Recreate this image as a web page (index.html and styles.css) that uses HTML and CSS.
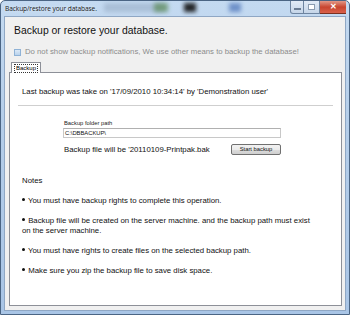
FILE: index.html
```html
<!DOCTYPE html>
<html lang="en">
<head>
<meta charset="UTF-8" />
<title>Backup/restore your database.</title>
<link rel="stylesheet" href="styles.css">
</head>
<body>

<div class="window">
  <!-- Title bar (aero glass) -->
  <div class="titlebar">
    <span class="blur b1"></span>
    <span class="blur b2"></span>
    <span class="blur b3"></span>
    <span class="blur b4"></span>
    <span class="title">Backup/restore your database.</span>
    <div class="caption-buttons">
      <span class="cbtn min"><i></i></span>
      <span class="cbtn max"><i></i></span>
      <span class="cbtn close">&#x2715;</span>
    </div>
  </div>

  <div class="client">
    <h1 class="heading">Backup or restore your database.</h1>

    <label class="notify">
      <span class="checkbox"></span>
      Do not show backup notifications, We use other means to backup the database!
    </label>

    <div class="tabs">
      <span class="tab"><span class="focus">Backup</span></span>
    </div>

    <div class="panel">
      <p class="last">Last backup was take on '17/09/2010 10:34:14' by 'Demonstration user'</p>
      <hr class="sep">

      <div class="form">
        <div class="label">Backup folder path</div>
        <div class="input">C:\DBBACKUP\</div>
        <div class="form-row">
          <span>Backup file will be '20110109-Printpak.bak</span>
          <span class="button">Start backup</span>
        </div>
      </div>

      <div class="notes">
        <p>Notes</p>
        <p><b class="dot"></b> You must have backup rights to complete this operation.</p>
        <p><b class="dot"></b> Backup file will be created on the server machine. and the backup path must exist on the server machine.</p>
        <p><b class="dot"></b> You must have rights to create files on the selected backup path.</p>
        <p><b class="dot"></b> Make sure you zip the backup file to save disk space.</p>
      </div>
    </div>
  </div>
</div>

</body>
</html>
```

FILE: styles.css
```css
/* --- Reset & basics --- */
* {
  margin: 0; padding: 0; box-sizing: border-box;
}
html, body {
  width: 350px;
  height: 315px;
  overflow: hidden;
  font-family: 'Liberation Sans', Arial, sans-serif;
  background: #fff;
}

/* --- Window frame --- */
.window {
  width: 350px;
  height: 315px;
  border: 1px solid #4b6584;
  border-radius: 5px 5px 0 0;
  background: linear-gradient(180deg, #c4daf1 0%, #b4cde9 40%, #a9c5e6 100%);
  display: flex;
  flex-direction: column;
  padding: 0 3px 3px 3px;
}

/* --- Title bar --- */
.titlebar {
  position: relative;
  height: 15px;
  display: flex;
  align-items: center;
  overflow: hidden;
}
.title {
  position: relative;
  font-family: 'Open Sans', sans-serif;
  font-size: 6.6px;
  color: #1a1a1a;
  letter-spacing: -0.1px;
  padding-left: 1px;
  text-shadow: 0 0 3px #e8f1fb;
}
.blur {
  position: absolute;
  top: 2px;
  height: 9px;
  filter: blur(2px);
  opacity: 0.7;
}
.b1 { left: 100px; width: 60px; background: #9fb4cc; }
.b2 { left: 150px; width: 14px; background: #5a8a56; }
.b3 { left: 180px; width: 12px; background: #111; opacity: 0.9; }
.b4 { left: 225px; width: 12px; background: #4c73b8; }

.caption-buttons {
  position: absolute;
  right: -2px;
  top: -1px;
  display: flex;
}
.cbtn {
  height: 14px;
  border: 1px solid #6d84a0;
  border-top: none;
  background: linear-gradient(180deg, #e3ecf7, #c5d5e8);
  display: flex;
  align-items: center;
  justify-content: center;
}
.min { width: 14px; border-radius: 0 0 0 3px; }
.max { width: 16px; border-left: none; }
.close {
  width: 28px;
  border-left: none;
  border-radius: 0 0 3px 0;
  background: linear-gradient(180deg, #e6a595, #c8452f 55%, #d9604a);
  color: #fff;
  font-size: 8px;
  font-weight: bold;
  border-color: #7a3020;
}
.min i {
  display: block;
  width: 7px;
  height: 2px;
  margin-top: 4px;
  background: #fff;
  border: 1px solid #6a7c93;
}
.max i {
  display: block;
  width: 7px;
  height: 6px;
  background: #fff;
  border: 1px solid #8a9bb0;
}

/* --- Client area --- */
.client {
  flex: 1;
  background: #f0f0f0;
  border: 1px solid #8fa7c4;
  display: flex;
  flex-direction: column;
  padding: 0 3px 4px 4px;
}
.heading {
  font-size: 10.4px;
  font-weight: normal;
  color: #111;
  margin: 8px 0 0 5px;
  line-height: 12px;
}
.notify {
  display: flex;
  align-items: center;
  gap: 4px;
  margin: 10px 0 0 5px;
  font-size: 7.75px;
  color: #8c8c8c;
  line-height: 10px;
}
.checkbox {
  width: 7px;
  height: 7px;
  border: 1px solid #8fb2d6;
  background: linear-gradient(180deg, #dbe9f7, #b9d2ec);
}

/* --- Tabs --- */
.tabs {
  display: flex;
  margin: 4px 0 0 2px;
  height: 11px;
}
.tab {
  position: relative;
  top: 1px;
  height: 11px;
  padding: 1px 2px;
  border: 1px solid #8d9098;
  border-bottom: none;
  background: #fff;
  font-size: 6px;
  line-height: 7px;
}
.focus {
  display: block;
  border: 1px dotted #333;
  padding: 0 1px;
  height: 9px;
  line-height: 7px;
}

/* --- Tab page --- */
.panel {
  flex: 1;
  background: #fff;
  border: 1px solid #8d9098;
  padding: 0 8px;
}
.last {
  font-size: 7.8px;
  color: #111;
  margin: 14px 0 0 4px;
  line-height: 10px;
}
.sep {
  border: none;
  border-top: 1px solid #cfcfcf;
  margin-top: 8px;
}

.form {
  margin: 14px 0 0 45px;
  width: 218px;
}
.label {
  font-size: 5.8px;
  color: #222;
  line-height: 7px;
  padding-left: 1px;
}
.input {
  margin-top: 1px;
  height: 10px;
  border: 1px solid #c8c8c8;
  border-top-color: #b0b0b0;
  font-size: 5.8px;
  line-height: 8px;
  padding-left: 1px;
  color: #111;
}
.form-row {
  display: flex;
  justify-content: space-between;
  align-items: center;
  margin-top: 6px;
  font-size: 7.8px;
  color: #111;
  padding-left: 1px;
}
.button {
  width: 50px;
  height: 11px;
  border: 1px solid #707070;
  border-radius: 2px;
  background: linear-gradient(180deg, #f2f2f2 0%, #ebebeb 50%, #dddddd 51%, #cfcfcf 100%);
  font-size: 5.8px;
  line-height: 9px;
  text-align: center;
  color: #111;
}

/* --- Notes --- */
.notes {
  margin: 21px 0 0 4px;
  width: 298px;
  font-size: 7.8px;
  color: #111;
  line-height: 10px;
}
.notes p {
  margin-bottom: 10px;
}
.dot {
  display: inline-block;
  width: 3px;
  height: 3px;
  border-radius: 50%;
  background: #111;
  vertical-align: 2px;
  margin-right: 1px;
}
```
